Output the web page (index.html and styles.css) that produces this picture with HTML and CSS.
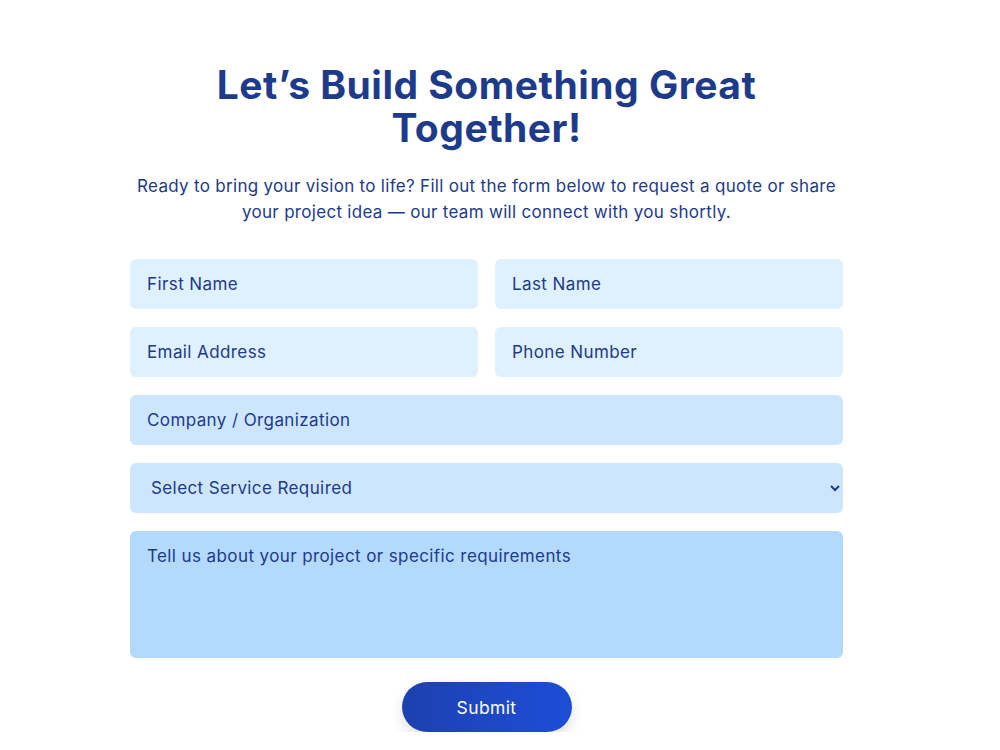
FILE: index.html
```html
<!DOCTYPE html>
<html lang="en">
<head>
    <meta charset="UTF-8">
    <meta name="viewport" content="width=device-width, initial-scale=1.0">
    <title>Let's Build Something Great Together!</title>
    <link rel="stylesheet" href="styles.css">
</head>
<body>
    <section class="contact">
        <h1>Let’s Build Something Great Together!</h1>
        <p class="intro">Ready to bring your vision to life? Fill out the form below to request a quote or share your project idea — our team will connect with you shortly.</p>

        <form class="quote-form" onsubmit="return false;">
            <div class="row">
                <input type="text" class="field light" placeholder="First Name">
                <input type="text" class="field light" placeholder="Last Name">
            </div>
            <div class="row">
                <input type="email" class="field light" placeholder="Email Address">
                <input type="tel" class="field light" placeholder="Phone Number">
            </div>
            <input type="text" class="field mid" placeholder="Company / Organization">
            <select class="field mid">
                <option>Select Service Required</option>
                <option>Web Development</option>
                <option>Mobile Apps</option>
                <option>UI / UX Design</option>
            </select>
            <textarea class="field deep" placeholder="Tell us about your project or specific requirements"></textarea>
            <button type="submit" class="submit-btn">Submit</button>
        </form>
    </section>
</body>
</html>
```

FILE: styles.css
```css
body {
    margin: 0;
    padding: 0 27px 0 0;
    background: #fff;
    font-family: Inter, "Noto Sans", sans-serif;
    color: #1e3a8a;
}
.contact {
    width: 713px;
    margin: 0 auto;
    padding-top: 63px;
    text-align: center;
}
h1 {
    margin: 0 auto;
    width: 580px;
    font-size: 39px;
    line-height: 43px;
    font-weight: 700;
    letter-spacing: 0.5px;
    color: #1e3a8a;
}
.intro {
    margin: 24px 0 0;
    font-size: 17px;
    line-height: 26px;
    letter-spacing: 0.3px;
    color: #1e3a8a;
}
.quote-form {
    margin-top: 34px;
    display: flex;
    flex-direction: column;
    gap: 18px;
}
.row {
    display: grid;
    grid-template-columns: 1fr 1fr;
    gap: 17px;
}
.field {
    box-sizing: border-box;
    width: 100%;
    height: 50px;
    border: none;
    border-radius: 6px;
    padding: 0 17px;
    font-family: inherit;
    font-size: 17px;
    letter-spacing: 0.4px;
    color: #1e3a8a;
    outline: none;
}
.field::placeholder {
    color: #1e3a8a;
    opacity: 1;
}
.light {
    background: #dff0fe;
}
.mid {
    background: #cde6fd;
}
select.field {
    padding-left: 17px;
}
.deep {
    background: #b3d9fd;
    height: 127px;
    padding-top: 13px;
    resize: none;
    line-height: 24px;
}
.submit-btn {
    align-self: center;
    width: 170px;
    height: 50px;
    margin-top: 6px;
    border: none;
    border-radius: 25px;
    background: linear-gradient(90deg, #1e40af, #1d4ed8);
    color: #fff;
    font-family: inherit;
    font-size: 17.5px;
    letter-spacing: 0.4px;
    box-shadow: 0 6px 14px rgba(0, 0, 0, 0.12);
    cursor: pointer;
}
```
